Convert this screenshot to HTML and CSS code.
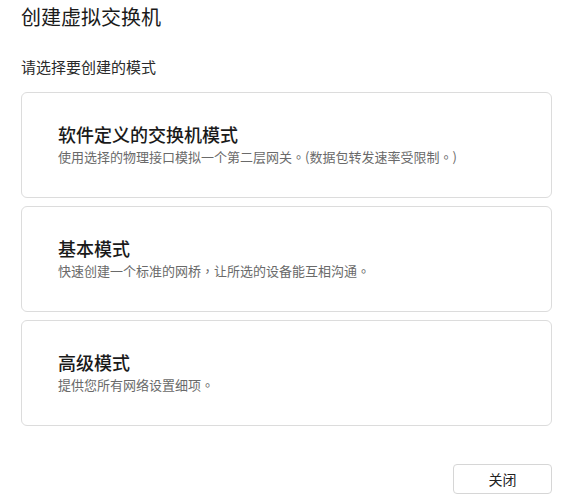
FILE: index.html
```html
<!DOCTYPE html>
<html lang="zh-CN">
<head>
<meta charset="utf-8">
<title>创建虚拟交换机</title>
<link rel="stylesheet" href="styles.css">
</head>
<body>
<div class="dialog">
  <h1 class="dialog-title">创建虚拟交换机</h1>
  <p class="prompt">请选择要创建的模式</p>
  <div class="options">
    <div class="option">
      <div class="option-title">软件定义的交换机模式</div>
      <div class="option-desc">使用选择的物理接口模拟一个第二层网关<span class="punct" lang="zh-TW">。</span>(数据包转发速率受限制<span class="punct" lang="zh-TW">。</span>)</div>
    </div>
    <div class="option">
      <div class="option-title">基本模式</div>
      <div class="option-desc">快速创建一个标准的网桥<span class="punct" lang="zh-TW">，</span>让所选的设备能互相沟通<span class="punct" lang="zh-TW">。</span></div>
    </div>
    <div class="option">
      <div class="option-title">高级模式</div>
      <div class="option-desc">提供您所有网络设置细项<span class="punct" lang="zh-TW">。</span></div>
    </div>
  </div>
  <div class="footer">
    <button class="btn">关闭</button>
  </div>
</div>
</body>
</html>
```
FILE: styles.css
```css
* { box-sizing: border-box; }
html, body {
  margin: 0;
  padding: 0;
  background: #ffffff;
}
body {
  font-family: "Noto Sans CJK SC", "Noto Sans", sans-serif;
  color: #1f1f1f;
}
.dialog {
  padding: 0 12px 0 21px;
}
.dialog-title {
  margin: 0;
  font-size: 20px;
  font-weight: 400;
  line-height: 34px;
  color: #1a1a1a;
}
.prompt {
  margin: 23px 0 0;
  font-size: 15px;
  line-height: 20px;
  color: #2a2a2a;
}
.options {
  margin-top: 15px;
  display: flex;
  flex-direction: column;
  gap: 8px;
}
.option {
  height: 106px;
  border: 1px solid #dcdcdc;
  border-radius: 6px;
  padding: 28px 36px;
}
.option-title {
  font-size: 18px;
  font-weight: 500;
  line-height: 26px;
  color: #1a1a1a;
}
.option-desc {
  font-size: 13px;
  line-height: 20px;
  color: #6a6a6a;
}
.punct {
  font-family: "Noto Sans CJK TC", "Noto Sans CJK SC", sans-serif;
}
.footer {
  margin-top: 38px;
  display: flex;
  justify-content: flex-end;
}
.btn {
  width: 99px;
  height: 30px;
  border: 1px solid #d6d6d6;
  border-radius: 4px;
  background: #ffffff;
  font-family: "Noto Sans CJK SC", "Noto Sans", sans-serif;
  font-size: 14px;
  color: #222222;
  padding: 0;
}
```
